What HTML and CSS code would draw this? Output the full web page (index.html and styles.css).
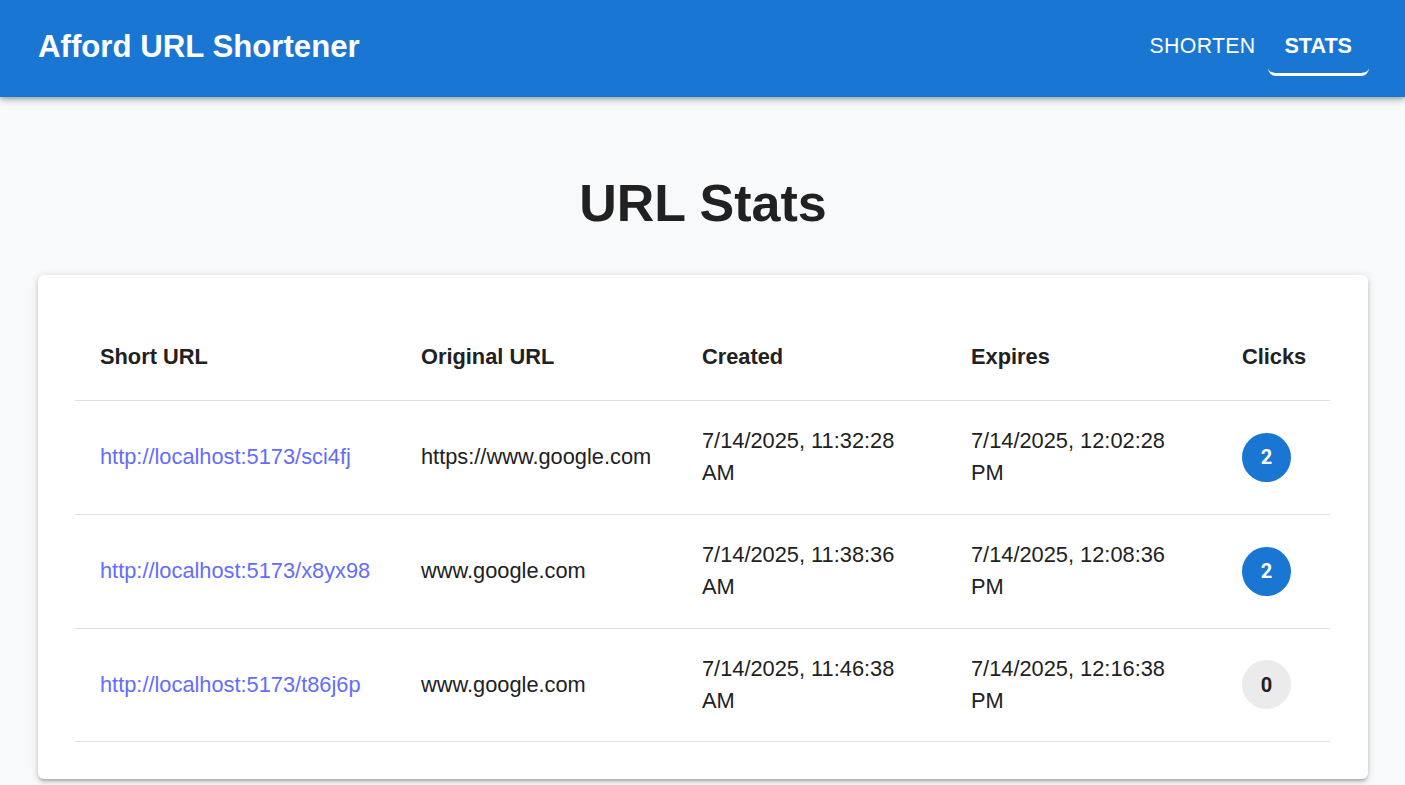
FILE: index.html
```html
<!DOCTYPE html>
<html lang="en">
<head>
<meta charset="utf-8">
<title>Afford URL Shortener</title>
<link rel="stylesheet" href="styles.css">
</head>
<body>
<header class="appbar">
  <div class="brand">Afford URL Shortener</div>
  <nav class="nav">
    <a class="nav-btn">SHORTEN</a>
    <a class="nav-btn active">STATS</a>
  </nav>
</header>
<main class="page">
  <h1 class="title">URL Stats</h1>
  <section class="card">
    <table class="stats">
      <colgroup>
        <col class="c1"><col class="c2"><col class="c3"><col class="c4"><col class="c5">
      </colgroup>
      <thead>
        <tr><th>Short URL</th><th>Original URL</th><th>Created</th><th>Expires</th><th>Clicks</th></tr>
      </thead>
      <tbody>
        <tr>
          <td><a class="link">http://localhost:5173/sci4fj</a></td>
          <td>https://www.google.com</td>
          <td>7/14/2025, 11:32:28 AM</td>
          <td>7/14/2025, 12:02:28 PM</td>
          <td><span class="badge blue">2</span></td>
        </tr>
        <tr>
          <td><a class="link">http://localhost:5173/x8yx98</a></td>
          <td>www.google.com</td>
          <td>7/14/2025, 11:38:36 AM</td>
          <td>7/14/2025, 12:08:36 PM</td>
          <td><span class="badge blue">2</span></td>
        </tr>
        <tr class="last">
          <td><a class="link">http://localhost:5173/t86j6p</a></td>
          <td>www.google.com</td>
          <td>7/14/2025, 11:46:38 AM</td>
          <td>7/14/2025, 12:16:38 PM</td>
          <td><span class="badge grey">0</span></td>
        </tr>
      </tbody>
    </table>
  </section>
</main>
</body>
</html>
```
FILE: styles.css
```css
* { box-sizing: border-box; }
html, body { margin: 0; padding: 0; }
body {
  background: #f8f9fb;
  font-family: "Liberation Sans", Arial, sans-serif;
  color: #212121;
  height: 785px;
  overflow: hidden;
}
.appbar {
  height: 97px;
  background: #1976d2;
  color: #fff;
  display: flex;
  justify-content: space-between;
  align-items: flex-start;
  padding: 0 36px 0 38px;
  box-shadow: 0 2px 4px -1px rgba(0,0,0,0.2), 0 4px 5px 0 rgba(0,0,0,0.14), 0 1px 10px 0 rgba(0,0,0,0.12);
  position: relative;
  z-index: 1;
}
.brand {
  font-size: 31.2px;
  font-weight: 700;
  line-height: 36px;
  margin-top: 29px;
}
.nav {
  display: flex;
  margin-top: 16px;
}
.nav-btn {
  height: 60px;
  display: flex;
  align-items: center;
  padding: 3px 13px 0 16px;
  color: #fff;
  font-size: 21.3px;
  letter-spacing: 0.3px;
  border-bottom: 3px solid transparent;
  border-radius: 8px;
}
.nav-btn.active {
  font-weight: 700;
  font-size: 21.6px;
  letter-spacing: 0;
  border-bottom-color: #fff;
  padding-left: 16px;
  padding-right: 17px;
}
.page {
  padding: 0 37px 0 38px;
}
.title {
  margin: 77px 0 43px;
  text-align: center;
  font-size: 52px;
  font-weight: 700;
  line-height: 58px;
  color: #212121;
}
.card {
  background: #fff;
  border-radius: 6px;
  padding: 37px 38px 37px 37px;
  box-shadow: 0 3px 3px -2px rgba(0,0,0,0.2), 0 3px 4px 0 rgba(0,0,0,0.14), 0 1px 8px 0 rgba(0,0,0,0.12);
}
.stats {
  width: 1255px;
  border-collapse: collapse;
  table-layout: fixed;
  font-size: 21.8px;
  line-height: 32px;
}
.c1 { width: 321px; }
.c2 { width: 281px; }
.c3 { width: 269px; }
.c4 { width: 271px; }
.c5 { width: 113px; }
.stats th {
  text-align: left;
  font-weight: 700;
  font-size: 21.8px;
  height: 88px;
  padding: 2px 25px 0;
  border-bottom: 1px solid #e0e0e0;
  vertical-align: middle;
}
.stats td {
  height: 114px;
  padding: 0 25px;
  border-bottom: 1px solid #e0e0e0;
  vertical-align: middle;
}
.stats tr.last td { height: 113px; }
.link { color: #646cff; text-decoration: none; }
.badge {
  display: inline-flex;
  align-items: center;
  justify-content: center;
  width: 49px;
  height: 49px;
  border-radius: 50%;
  font-family: Roboto, "Liberation Sans", sans-serif;
  font-weight: 700;
  font-size: 20px;
  vertical-align: middle;
}
.badge.blue { background: #1976d2; color: #fff; }
.badge.grey { background: #ebebeb; color: #212121; }
```
